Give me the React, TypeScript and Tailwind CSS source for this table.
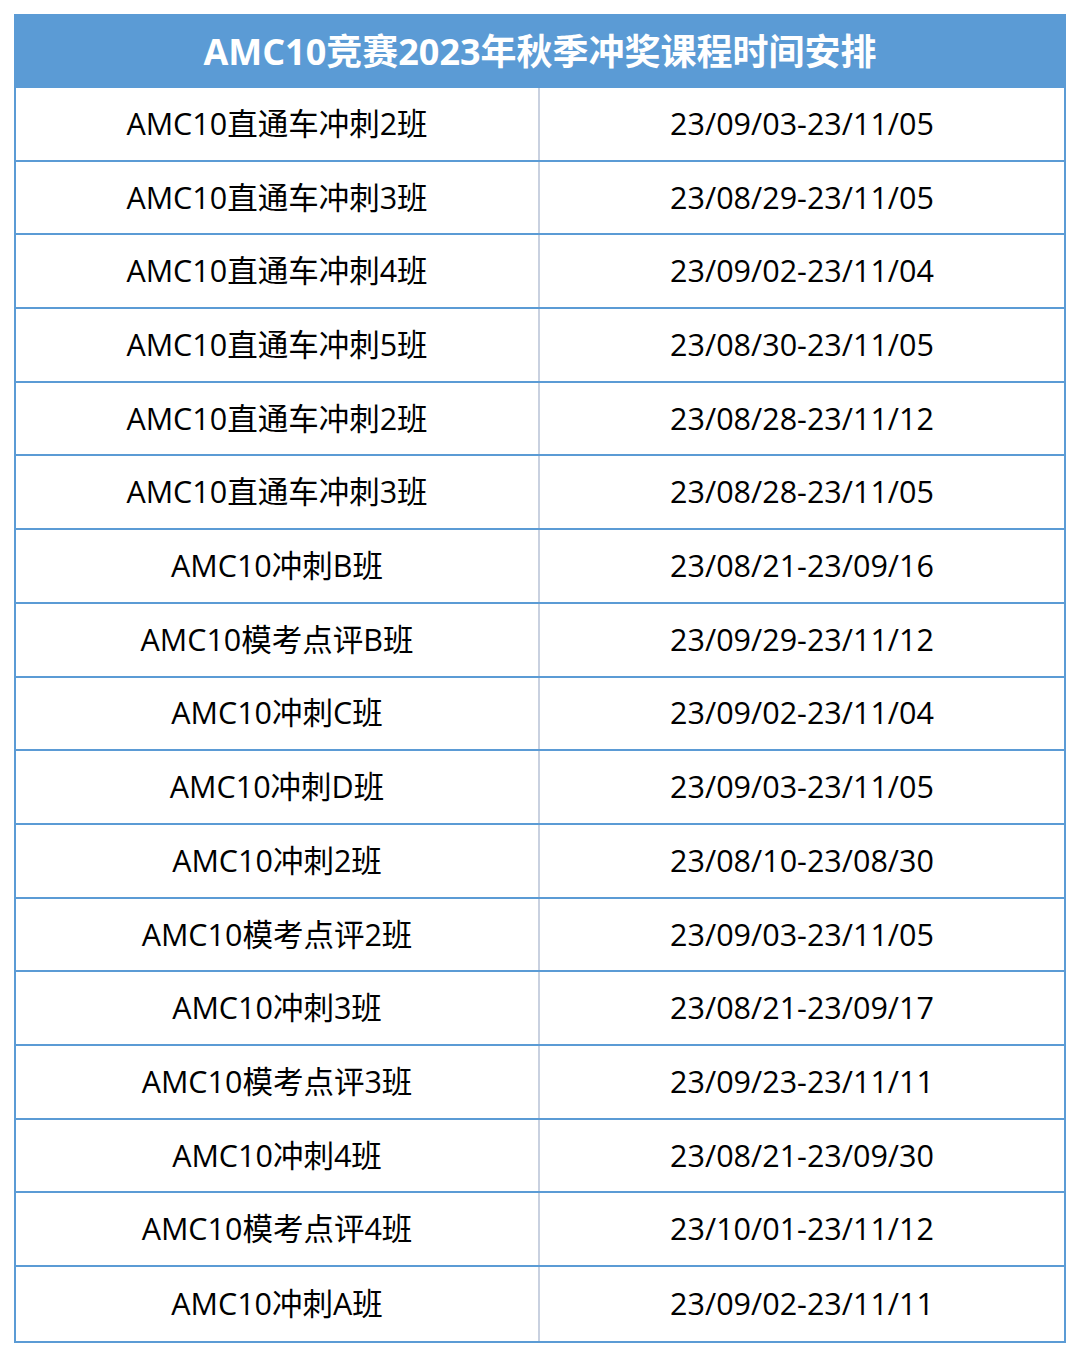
const rows: [string, string][] = [
  ["AMC10直通车冲刺2班", "23/09/03-23/11/05"],
  ["AMC10直通车冲刺3班", "23/08/29-23/11/05"],
  ["AMC10直通车冲刺4班", "23/09/02-23/11/04"],
  ["AMC10直通车冲刺5班", "23/08/30-23/11/05"],
  ["AMC10直通车冲刺2班", "23/08/28-23/11/12"],
  ["AMC10直通车冲刺3班", "23/08/28-23/11/05"],
  ["AMC10冲刺B班", "23/08/21-23/09/16"],
  ["AMC10模考点评B班", "23/09/29-23/11/12"],
  ["AMC10冲刺C班", "23/09/02-23/11/04"],
  ["AMC10冲刺D班", "23/09/03-23/11/05"],
  ["AMC10冲刺2班", "23/08/10-23/08/30"],
  ["AMC10模考点评2班", "23/09/03-23/11/05"],
  ["AMC10冲刺3班", "23/08/21-23/09/17"],
  ["AMC10模考点评3班", "23/09/23-23/11/11"],
  ["AMC10冲刺4班", "23/08/21-23/09/30"],
  ["AMC10模考点评4班", "23/10/01-23/11/12"],
  ["AMC10冲刺A班", "23/09/02-23/11/11"],
];

export default function App() {
  return (
    <div className="w-[1080px] h-[1356px] bg-white pt-[14px] pl-[14px] font-['Open_Sans','Noto_Sans_CJK_SC',sans-serif]">
      <div className="w-[1052px] border-2 border-[#5b9bd5] flex flex-col">
        <div className="h-[72px] bg-[#5b9bd5] flex items-center justify-center text-white text-[36px] font-bold">
          AMC10竞赛2023年秋季冲奖课程时间安排
        </div>
        {rows.map(([name, date], i) => (
          <div
            key={i}
            className={`h-[73.7px] flex text-[30.5px] text-black ${i < rows.length - 1 ? "border-b-2 border-[#5b9bd5]" : ""}`}
          >
            <div className="w-[524px] flex items-center justify-center border-r-2 border-[#c9d1e0]">
              {name}
            </div>
            <div className="flex-1 flex items-center justify-center">{date}</div>
          </div>
        ))}
      </div>
    </div>
  );
}
